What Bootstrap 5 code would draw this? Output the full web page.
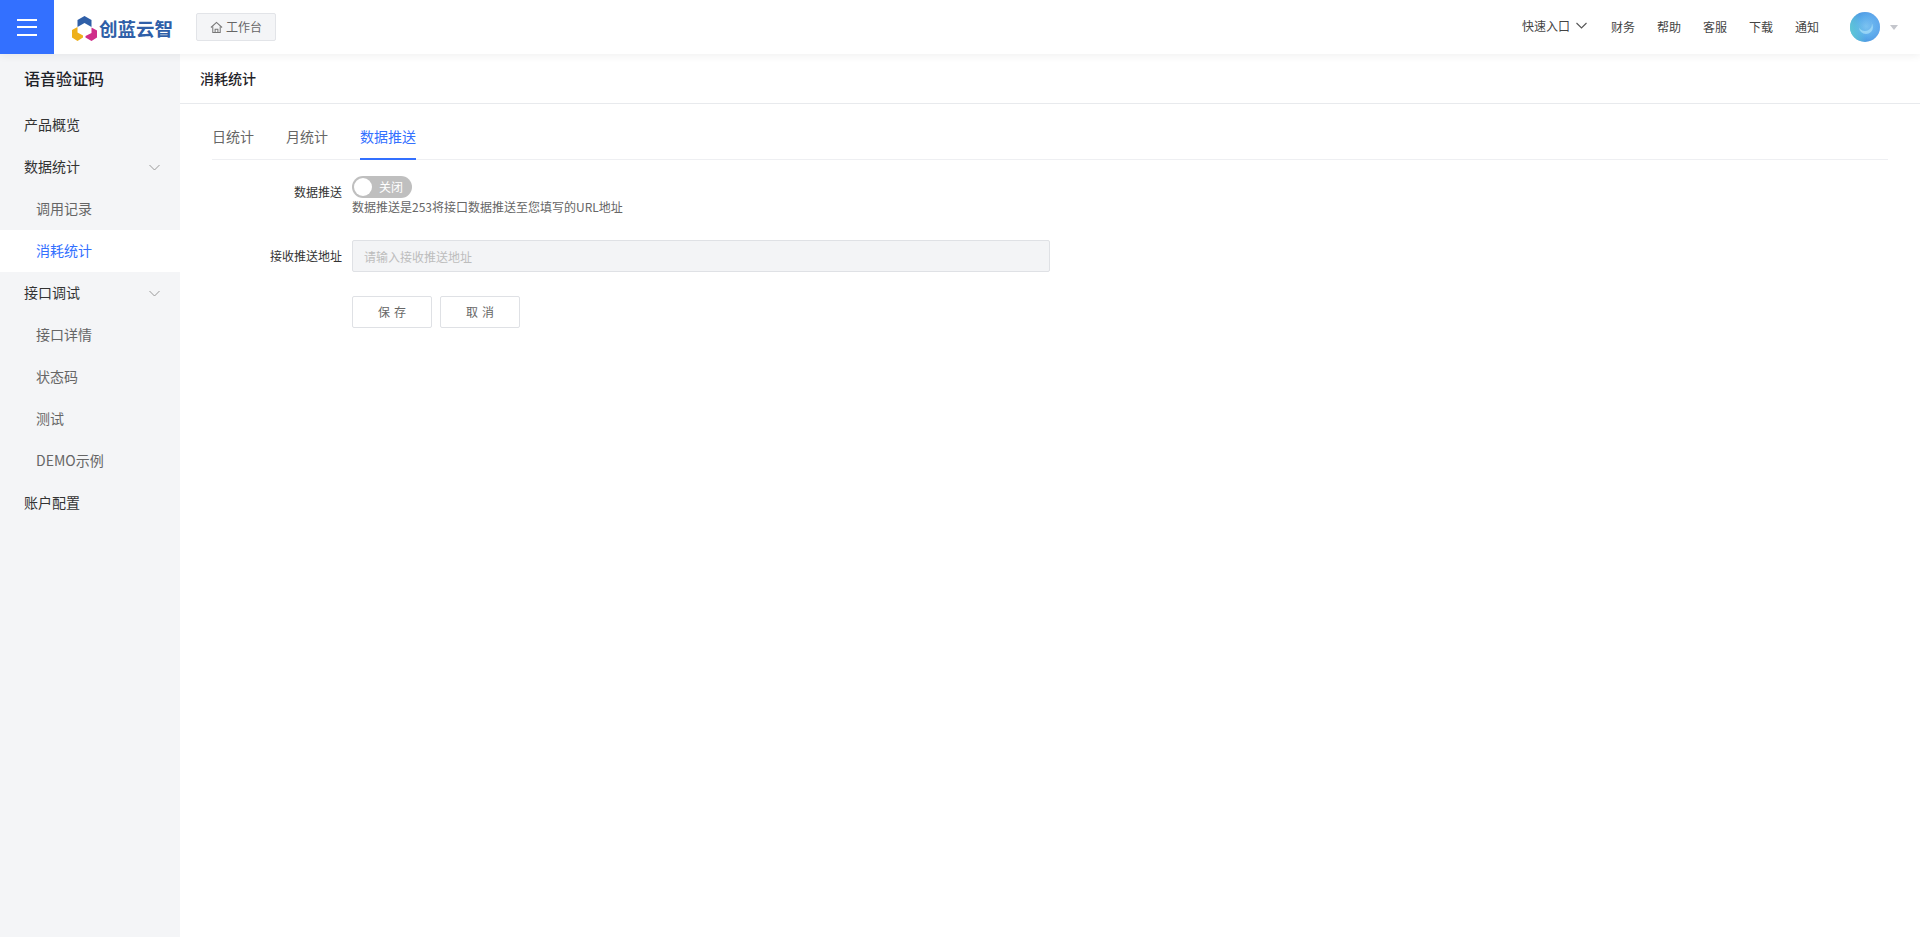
<!DOCTYPE html>
<html lang="zh">
<head>
<meta charset="utf-8">
<title>消耗统计</title>
<link href="https://cdn.jsdelivr.net/npm/bootstrap@5.3.0/dist/css/bootstrap.min.css" rel="stylesheet">
<style>
html,body{height:100%}
body{font-family:"Noto Sans CJK SC","Liberation Sans",sans-serif;font-size:12px;color:#333;background:#fff;overflow:hidden}
.topbar{height:54px;background:#fff;box-shadow:0 2px 8px rgba(0,0,0,.06);position:relative;z-index:2}
.menu-btn{width:54px;height:54px;background:#3370ff;border:0;padding:0;flex-direction:column;gap:5.5px}
.menu-btn i{display:block;width:20px;height:2px;background:#fff}
.logo-wrap{width:142px;padding:3px 0 0 18px;gap:2px}
.logo-text{font-size:18.5px;font-weight:700;color:#2f5fa8;line-height:1;white-space:nowrap}
.home-btn{width:80px;height:28px;background:#f4f5f7;border:1px solid #e2e4e8;border-radius:2px;color:#666;font-size:12px;gap:3px}
.top-links{gap:22px;color:#444;font-size:12px}
.quick{gap:6px;margin-bottom:3px;margin-right:2px}
.avatar{display:block;width:30px;height:30px;border-radius:50%;background:radial-gradient(circle at 55% 48%,#7cc4f0 0,#58aaea 45%,#3f80d8 100%);position:relative;overflow:hidden;margin-left:9px}
.avatar:before{content:"";position:absolute;inset:0;background:linear-gradient(75deg,#63d6d2 0,rgba(99,214,210,0) 45%,rgba(120,180,245,.5) 100%)}
.avatar:after{content:"";position:absolute;left:8px;top:5px;width:14px;height:14px;border-radius:50%;box-shadow:1px 3px 0 0 rgba(170,225,250,.7)}
.caret-down{width:0;height:0;border-left:4px solid transparent;border-right:4px solid transparent;border-top:5px solid #c4c6cc;margin-left:10px;margin-right:22px}
.shell{height:883px}
.side{width:180px;background:#f4f5f7;flex:none}
.side-title{height:50px;padding-left:24px;font-size:16px;font-weight:500;color:#1f2329;line-height:48px}
.side-item{height:42px;padding:0 20px 2px 24px;font-size:14px;color:#333;line-height:40px}
.side-item svg{margin-top:2px}
.side-item.sub{padding-left:36px;color:#666}
.side-item.on{background:#fff;color:#3370ff}
.main-area{min-width:0}
.crumb{height:50px;padding-left:20px;font-size:14px;font-weight:500;color:#1f2329;line-height:48px;border-bottom:1px solid #e8eaed}
.tab-row{margin:0 32px;height:56px;border-bottom:1px solid #eeeff2;gap:32px;padding-top:15px}
.tab-item{font-size:14px;color:#666;height:41px;line-height:22px;padding-top:6px}
.tab-item.on{color:#3370ff;border-bottom:2px solid #3370ff}
.fl{width:130px;margin-left:32px;margin-right:10px;flex:none;text-align:right;color:#333;font-size:12px}
.fl-top{padding-top:7px;line-height:18px}
.toggle-off{width:60px;height:22px;border-radius:11px;background:#bfbfbf;color:#fff;font-size:12px;line-height:22px;position:relative;padding-left:27px}
.toggle-off:before{content:"";position:absolute;left:2px;top:2px;width:18px;height:18px;border-radius:50%;background:#fff}
.hint{color:#666;font-size:12px;line-height:18px}
.addr{width:698px;height:32px;background:#f3f4f6;border:1px solid #dfe1e5;border-radius:2px;color:#bdbdbd;font-size:12px;line-height:30px;padding:0 11px}
.addr::placeholder{color:#bdbdbd}
.plain-btn{width:80px;height:32px;background:#fff;border:1px solid #dfe1e5;border-radius:2px;color:#666;font-size:12px;letter-spacing:4px;padding:0 0 0 4px}
.btn-row .fl{margin-right:2px}
</style>
</head>
<body>
<header class="topbar d-flex align-items-center">
  <button class="menu-btn d-flex align-items-center justify-content-center" type="button" aria-label="菜单"><i></i><i></i><i></i></button>
  <div class="logo-wrap d-flex align-items-center">
    <svg width="25" height="25" viewBox="0 0 25 25" aria-hidden="true">
      <path d="M12.500 0 19.500 4V11L12.500 7 5.500 11V4Z" fill="#2f5fa8"/>
      <path d="M0 14 5.500 11V16.500L11 19.500V21.500L5.500 25 0 21.500Z" fill="#eeb01b"/>
      <path d="M25 14.500 19.500 11.500V17L13.500 20V21.500L19.500 25 25 21.500Z" fill="#cf2e8a"/>
    </svg>
    <span class="logo-text">创蓝云智</span>
  </div>
  <div class="home-btn d-flex align-items-center justify-content-center">
    <svg width="13" height="13" viewBox="0 0 14 14" fill="none" stroke="#777" stroke-width="1.100" aria-hidden="true"><path d="M1 7 7 1.500 13 7"/><path d="M3 6V12.500H11V6"/><path d="M5.500 12.500V9H8.500V12.500"/></svg>
    <span>工作台</span>
  </div>
  <div class="ms-auto d-flex align-items-center top-links">
    <span class="quick d-inline-flex align-items-center">快速入口
      <svg width="11" height="7" viewBox="0 0 11 7" fill="none" stroke="#555" stroke-width="1.100" aria-hidden="true"><path d="M.5 1 5.500 6 10.500 1"/></svg>
    </span>
    <span>财务</span><span>帮助</span><span>客服</span><span>下载</span><span>通知</span>
    <div class="d-flex align-items-center">
      <span class="avatar"></span>
      <span class="caret-down"></span>
    </div>
  </div>
</header>
<div class="shell d-flex">
  <aside class="side">
    <div class="side-title">语音验证码</div>
    <div class="side-item">产品概览</div>
    <div class="side-item d-flex align-items-center justify-content-between"><span>数据统计</span>
      <svg width="11" height="7" viewBox="0 0 11 7" fill="none" stroke="#999" aria-hidden="true"><path d="M.5 1 5.500 6 10.500 1"/></svg></div>
    <div class="side-item sub">调用记录</div>
    <div class="side-item sub on">消耗统计</div>
    <div class="side-item d-flex align-items-center justify-content-between"><span>接口调试</span>
      <svg width="11" height="7" viewBox="0 0 11 7" fill="none" stroke="#999" aria-hidden="true"><path d="M.5 1 5.500 6 10.500 1"/></svg></div>
    <div class="side-item sub">接口详情</div>
    <div class="side-item sub">状态码</div>
    <div class="side-item sub">测试</div>
    <div class="side-item sub">DEMO示例</div>
    <div class="side-item">账户配置</div>
  </aside>
  <main class="main-area flex-grow-1">
    <div class="crumb">消耗统计</div>
    <div class="tab-row d-flex">
      <div class="tab-item">日统计</div>
      <div class="tab-item">月统计</div>
      <div class="tab-item on">数据推送</div>
    </div>
    <div class="d-flex mt-3">
      <div class="fl fl-top">数据推送</div>
      <div>
        <div class="toggle-off">关闭</div>
        <div class="hint">数据推送是253将接口数据推送至您填写的URL地址</div>
      </div>
    </div>
    <div class="d-flex align-items-center mt-4">
      <div class="fl">接收推送地址</div>
      <input class="addr" type="text" placeholder="请输入接收推送地址" disabled>
    </div>
    <div class="d-flex gap-2 btn-row mt-4">
      <div class="fl"></div>
      <button class="btn plain-btn" type="button">保存</button>
      <button class="btn plain-btn" type="button">取消</button>
    </div>
  </main>
</div>
<script src="https://cdn.jsdelivr.net/npm/bootstrap@5.3.0/dist/js/bootstrap.bundle.min.js"></script>
</body>
</html>
